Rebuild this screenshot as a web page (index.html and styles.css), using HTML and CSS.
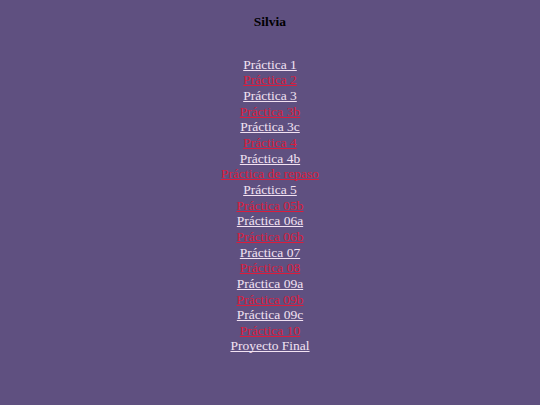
FILE: index.html
```html
<!DOCTYPE html>
<html lang="es">
<head>
<meta charset="utf-8">
<title>Silvia</title>
<link rel="stylesheet" href="styles.css">
</head>
<body>
<h1 class="title">Silvia</h1>
<nav class="links">
<a class="light" href="#">Práctica 1</a>
<a class="red" href="#">Práctica 2</a>
<a class="light" href="#">Práctica 3</a>
<a class="red" href="#">Práctica 3b</a>
<a class="light" href="#">Práctica 3c</a>
<a class="red" href="#">Práctica 4</a>
<a class="light" href="#">Práctica 4b</a>
<a class="red" href="#">Práctica de repaso</a>
<a class="light" href="#">Práctica 5</a>
<a class="red" href="#">Práctica 05b</a>
<a class="light" href="#">Práctica 06a</a>
<a class="red" href="#">Práctica 06b</a>
<a class="light" href="#">Práctica 07</a>
<a class="red" href="#">Práctica 08</a>
<a class="light" href="#">Práctica 09a</a>
<a class="red" href="#">Práctica 09b</a>
<a class="light" href="#">Práctica 09c</a>
<a class="red" href="#">Práctica 10</a>
<a class="light" href="#">Proyecto Final</a>
</nav>
</body>
</html>
```
FILE: styles.css
```css
html, body {
  margin: 0;
  background: #5f5080;
}
body {
  padding-top: 14px;
  font-family: "Liberation Serif", "Times New Roman", serif;
  font-size: 13.5px;
  line-height: 15.65px;
  text-align: center;
}
.title {
  margin: 0;
  font-size: 13.5px;
  line-height: 15.65px;
  font-weight: bold;
  color: #000;
}
.links {
  margin-top: 27px;
  display: flex;
  flex-direction: column;
  align-items: center;
}
.links a {
  text-decoration: underline;
  text-decoration-thickness: 1px;
  text-decoration-skip-ink: none;
}
.light {
  color: #f2e2f2;
}
.red {
  color: #dc1c3c;
  text-decoration-thickness: 2px;
}
```
